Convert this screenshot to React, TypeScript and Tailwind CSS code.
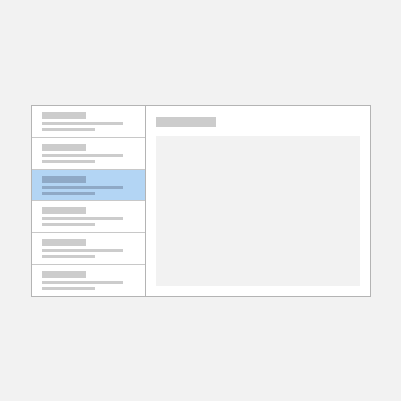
import React from 'react';

const rows = [0, 1, 2, 3, 4, 5];

const ListRow: React.FC<{ selected?: boolean; last?: boolean }> = ({ selected, last }) => (
  <div
    className={`flex-1 flex flex-col gap-[3px] pl-[10px] pt-[6px] ${last ? '' : 'border-b border-[#c8c8c8]'} ${
      selected ? 'bg-[#b3d5f4]' : 'bg-white'
    }`}
  >
    <div className={`h-[7px] w-[44px] ${selected ? 'bg-[#8fa9c6]' : 'bg-[#cccccc]'}`} />
    <div className={`h-[3px] w-[81px] ${selected ? 'bg-[#8fa9c6]' : 'bg-[#cccccc]'}`} />
    <div className={`h-[3px] w-[53px] ${selected ? 'bg-[#8fa9c6]' : 'bg-[#cccccc]'}`} />
  </div>
);

export default function App() {
  return (
    <div className="w-[401px] h-[401px] bg-[#f2f2f2] pl-[31px] pt-[105px]">
      <div className="w-[340px] h-[192px] border border-[#b4b4b4] bg-white flex">
        <div className="w-[114px] border-r border-[#b4b4b4] flex flex-col">
          {rows.map((i) => (
            <ListRow key={i} selected={i === 2} last={i === rows.length - 1} />
          ))}
        </div>
        <div className="flex-1 flex flex-col pl-[10px] pr-[10px] pt-[11px] pb-[10px]">
          <div className="h-[10px] w-[60px] bg-[#cccccc]" />
          <div className="mt-[9px] flex-1 bg-[#f2f2f2]" />
        </div>
      </div>
    </div>
  );
}
